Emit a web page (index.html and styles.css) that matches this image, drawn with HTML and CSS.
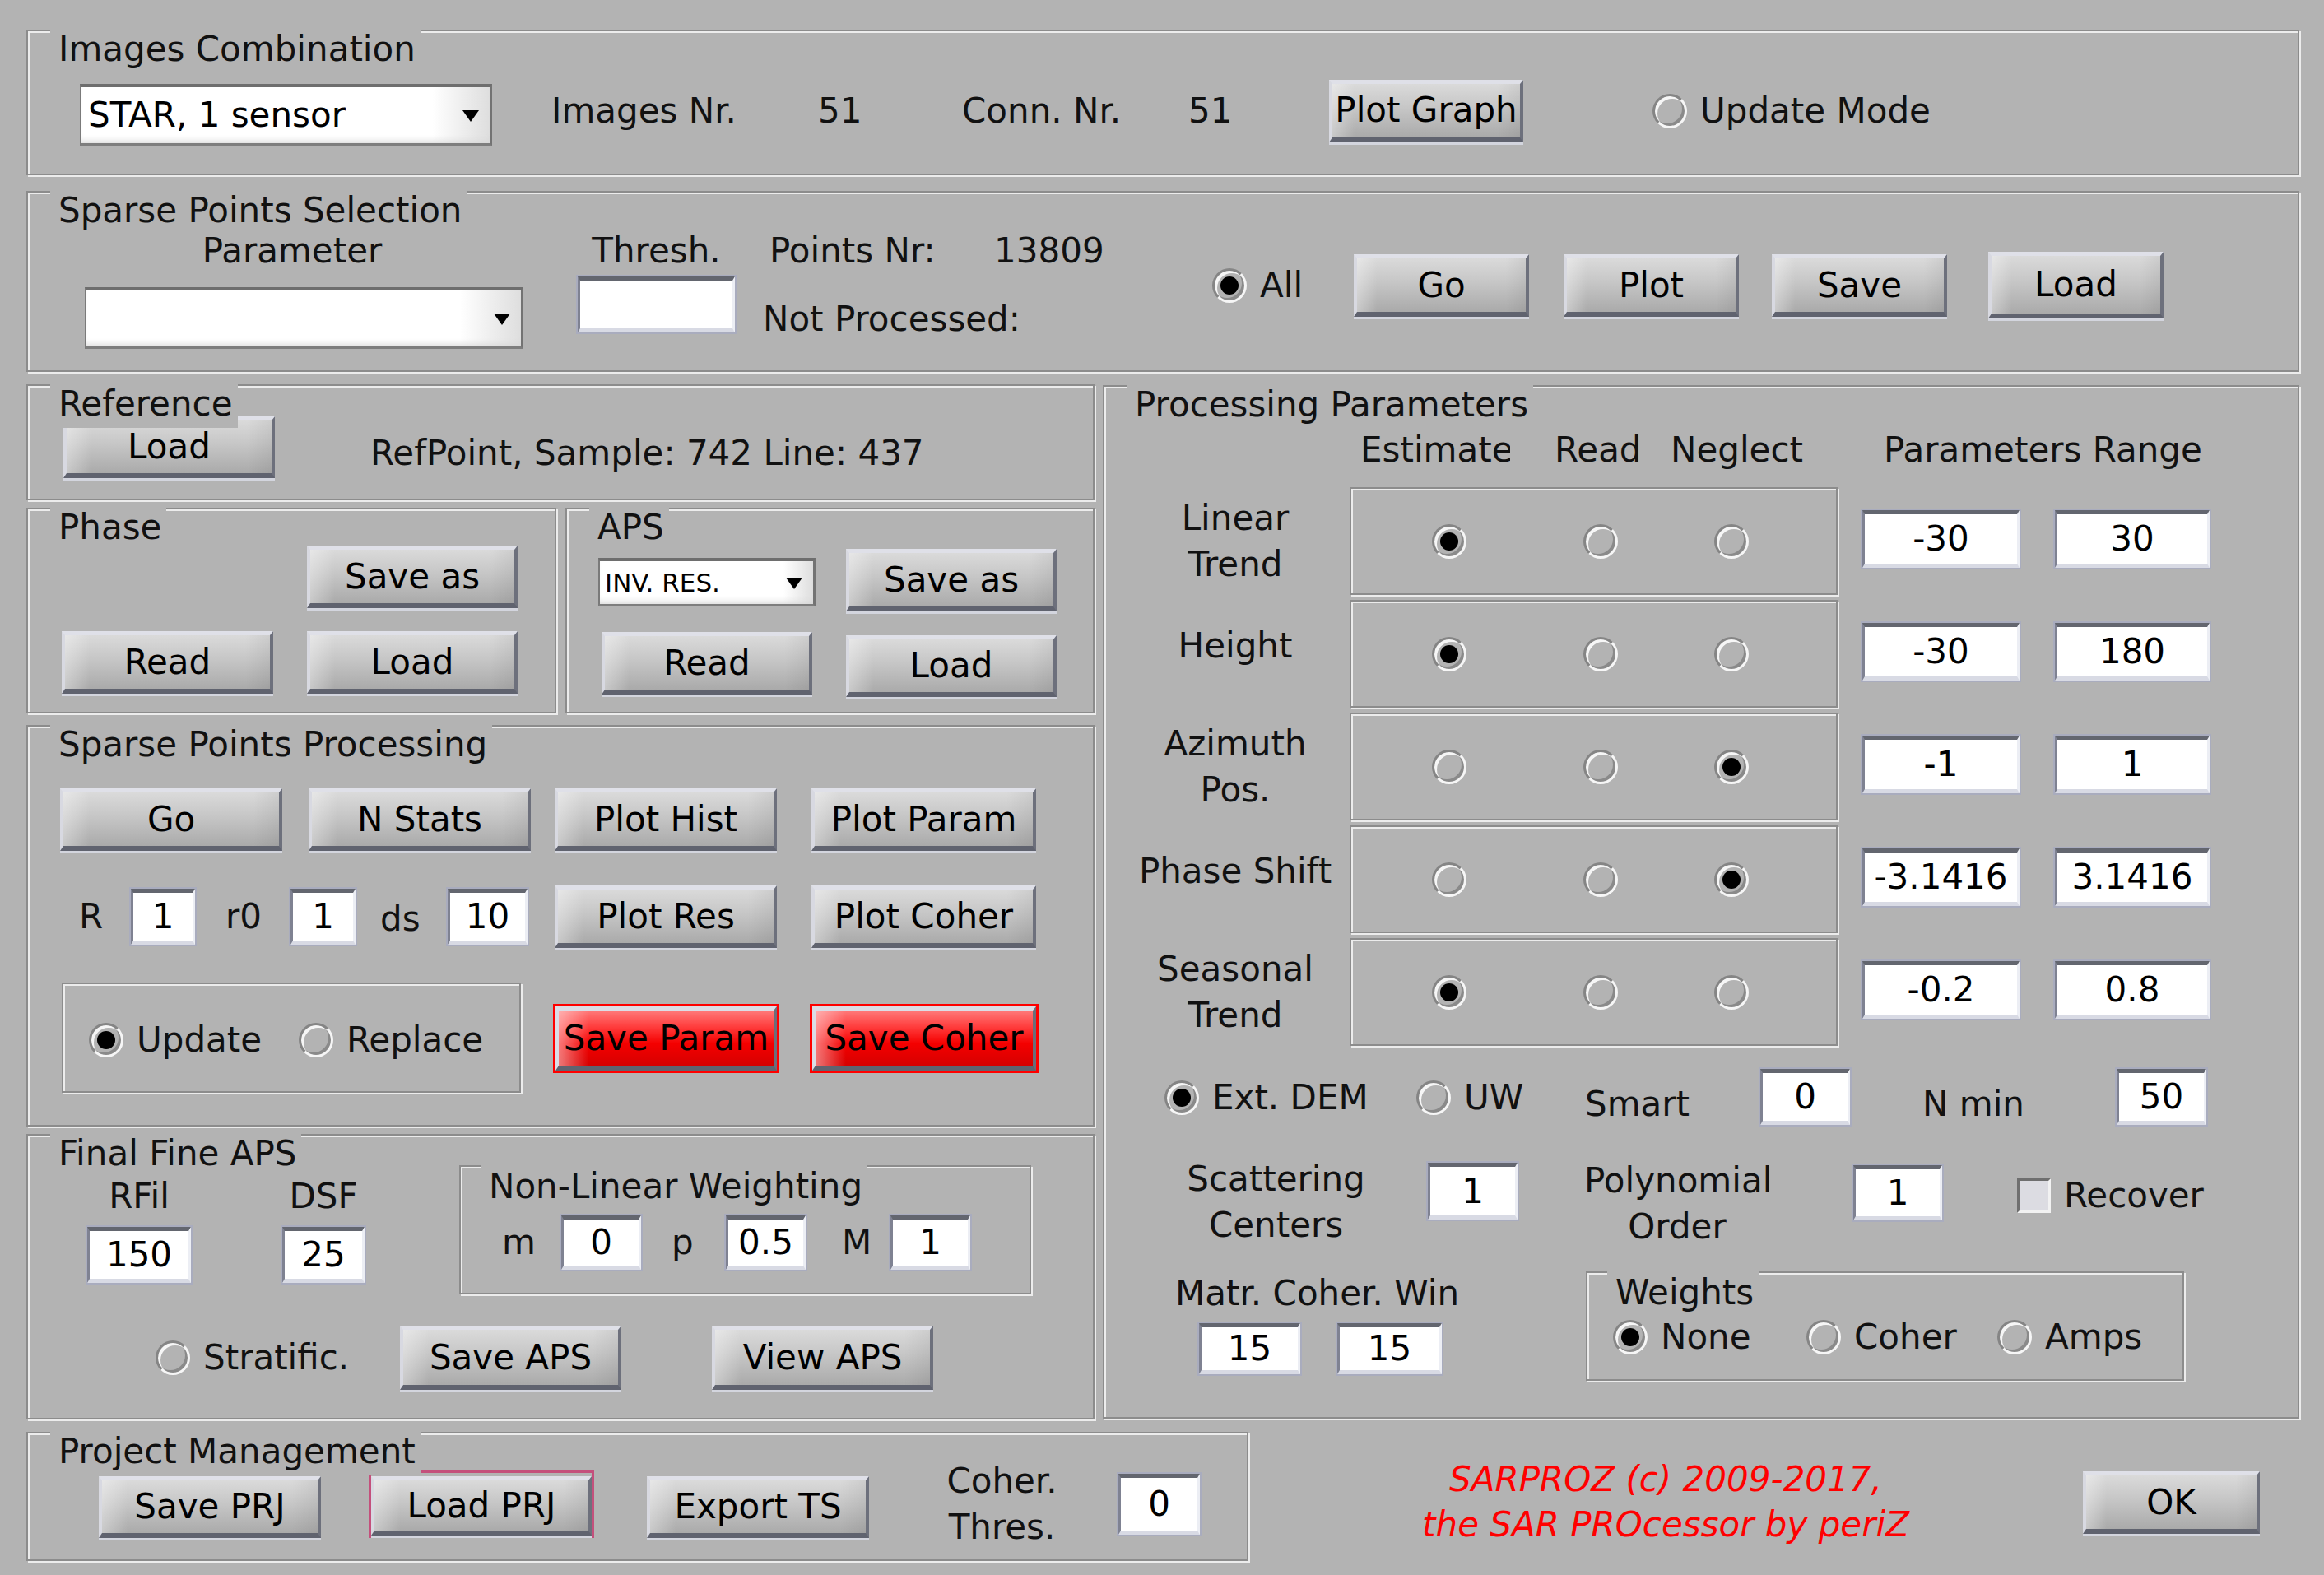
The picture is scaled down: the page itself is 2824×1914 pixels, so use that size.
FILE: index.html
```html
<!DOCTYPE html>
<html>
<head>
<meta charset="utf-8">
<title>SARPROZ Sparse Points Processing</title>
<link rel="stylesheet" href="styles.css">
</head>
<body>
<div class="fig">

  <section class="panel p-images">
    <div class="ptitle">Images Combination</div>
    <div class="row-images">
      <div class="dd dd-star">STAR, 1 sensor</div>
      <span>Images Nr.</span>
      <span>51</span>
      <span>Conn. Nr.</span>
      <span>51</span>
      <div class="btn btn-plotgraph">Plot Graph</div>
      <div class="opt"><span class="radio"></span><span>Update Mode</span></div>
    </div>
  </section>

  <section class="panel p-select">
    <div class="ptitle">Sparse Points Selection</div>
    <div class="row-select">
      <div class="col-param">
        <div class="lbl-param">Parameter</div>
        <div class="dd dd-param"></div>
      </div>
      <div class="col-thresh">
        <div class="lbl-center">Thresh.</div>
        <div class="inp inp-thresh"></div>
      </div>
      <div class="col-points">
        <div class="points-line"><span class="pn">Points Nr:</span><span>13809</span></div>
        <div class="np-line">Not Processed:</div>
      </div>
      <div class="opt opt-all"><span class="radio on"></span><span>All</span></div>
      <div class="btn btn-sel">Go</div>
      <div class="btn btn-sel btn-plot">Plot</div>
      <div class="btn btn-sel btn-save">Save</div>
      <div class="btn btn-sel btn-load">Load</div>
    </div>
  </section>

  <div class="middle">
    <div class="leftcol">
      <section class="panel p-ref">
        <div class="ptitle">Reference</div>
        <div class="row-ref">
          <div class="btn btn-refload">Load</div>
          <span class="reftext">RefPoint, Sample: 742 Line: 437</span>
        </div>
      </section>

      <div class="phase-row">
        <section class="panel p-phase">
          <div class="ptitle">Phase</div>
          <div class="grid-phase">
            <div></div>
            <div class="btn">Save as</div>
            <div class="btn">Read</div>
            <div class="btn">Load</div>
          </div>
        </section>
        <section class="panel p-aps">
          <div class="ptitle">APS</div>
          <div class="grid-aps">
            <div class="dd dd-small">INV. RES.</div>
            <div class="btn">Save as</div>
            <div class="btn btn-aps-read">Read</div>
            <div class="btn btn-aps-load">Load</div>
          </div>
        </section>
      </div>

      <section class="panel p-sproc">
        <div class="ptitle">Sparse Points Processing</div>
        <div class="grid-sproc">
          <div class="btn btn-sp">Go</div>
          <div class="btn btn-sp">N Stats</div>
          <div class="btn btn-sp">Plot Hist</div>
          <div class="btn btn-sp btn-wide">Plot Param</div>

          <div class="rparams">
            <span>R</span>
            <div class="inp inp-r">1</div>
            <span>r0</span>
            <div class="inp inp-r0">1</div>
            <span class="ds">ds</span>
            <div class="inp inp-ds">10</div>
          </div>
          <div class="btn btn-sp">Plot Res</div>
          <div class="btn btn-sp btn-wide">Plot Coher</div>

          <div class="subframe">
            <div class="opt opt-update"><span class="radio on"></span><span>Update</span></div>
            <div class="opt"><span class="radio"></span><span>Replace</span></div>
          </div>
          <div class="btn btn-red">Save Param</div>
          <div class="btn btn-red btn-red-wide">Save Coher</div>
        </div>
      </section>

      <section class="panel p-final">
        <div class="ptitle">Final Fine APS</div>
        <div class="final-top">
          <div class="col-rfil">
            <div class="lbl-center">RFil</div>
            <div class="inp inp-final">150</div>
          </div>
          <div class="col-dsf">
            <div class="lbl-center">DSF</div>
            <div class="inp inp-final">25</div>
          </div>
          <div class="panel frame-nlw">
            <div class="ptitle ptitle-sub">Non-Linear Weighting</div>
            <div class="row-nlw">
              <span>m</span>
              <div class="inp inp-nlw">0</div>
              <span>p</span>
              <div class="inp inp-nlw">0.5</div>
              <span>M</span>
              <div class="inp inp-nlw">1</div>
            </div>
          </div>
        </div>
        <div class="final-bottom">
          <div class="opt"><span class="radio"></span><span>Stratific.</span></div>
          <div class="btn btn-aps">Save APS</div>
          <div class="btn btn-aps">View APS</div>
        </div>
      </section>
    </div>

    <section class="panel p-proc">
      <div class="ptitle">Processing Parameters</div>
      <div class="proc-head">
        <span class="hd-est">Estimate</span>
        <span>Read</span>
        <span>Neglect</span>
        <span>Parameters Range</span>
      </div>
      <div class="proc-rows">
        <div class="prow">
          <div class="plabel">Linear<br>Trend</div>
          <div class="panel pbox"><span class="radio on"></span><span class="radio"></span><span class="radio"></span></div>
          <div class="inp rng1">-30</div>
          <div class="inp rng2">30</div>
        </div>
        <div class="prow">
          <div class="plabel single">Height</div>
          <div class="panel pbox"><span class="radio on"></span><span class="radio"></span><span class="radio"></span></div>
          <div class="inp rng1">-30</div>
          <div class="inp rng2">180</div>
        </div>
        <div class="prow">
          <div class="plabel">Azimuth<br>Pos.</div>
          <div class="panel pbox"><span class="radio"></span><span class="radio"></span><span class="radio on"></span></div>
          <div class="inp rng1">-1</div>
          <div class="inp rng2">1</div>
        </div>
        <div class="prow">
          <div class="plabel single">Phase Shift</div>
          <div class="panel pbox"><span class="radio"></span><span class="radio"></span><span class="radio on"></span></div>
          <div class="inp rng1">-3.1416</div>
          <div class="inp rng2">3.1416</div>
        </div>
        <div class="prow">
          <div class="plabel">Seasonal<br>Trend</div>
          <div class="panel pbox"><span class="radio on"></span><span class="radio"></span><span class="radio"></span></div>
          <div class="inp rng1">-0.2</div>
          <div class="inp rng2">0.8</div>
        </div>
      </div>

      <div class="proc-dem">
        <div class="opt"><span class="radio on"></span><span>Ext. DEM</span></div>
        <div class="opt"><span class="radio"></span><span>UW</span></div>
        <span class="lower">Smart</span>
        <div class="inp inp-dem">0</div>
        <span class="lower">N min</span>
        <div class="inp inp-dem">50</div>
      </div>

      <div class="proc-scat">
        <div class="two-line lbl-scat">Scattering<br>Centers</div>
        <div class="inp inp-scat">1</div>
        <div class="two-line lbl-poly">Polynomial<br>Order</div>
        <div class="inp inp-poly">1</div>
        <div class="opt opt-chk"><span class="chk"></span><span>Recover</span></div>
      </div>

      <div class="proc-bottom">
        <div class="col-matr">
          <div class="matr-label">Matr. Coher. Win</div>
          <div class="matr-inputs">
            <div class="inp inp-win1">15</div>
            <div class="inp inp-win2">15</div>
          </div>
        </div>
        <div class="panel frame-weights">
          <div class="ptitle ptitle-sub">Weights</div>
          <div class="row-weights">
            <div class="opt"><span class="radio on"></span><span>None</span></div>
            <div class="opt"><span class="radio"></span><span>Coher</span></div>
            <div class="opt"><span class="radio"></span><span>Amps</span></div>
          </div>
        </div>
      </div>
    </section>
  </div>

  <div class="bottom">
    <section class="panel p-proj">
      <div class="ptitle">Project Management</div>
      <div class="row-proj">
        <div class="btn btn-prj">Save PRJ</div>
        <div class="focus"><div class="btn btn-prj-in">Load PRJ</div></div>
        <div class="btn btn-prj">Export TS</div>
        <div class="coher-lbl">Coher.<br>Thres.</div>
        <div class="inp inp-coher">0</div>
      </div>
    </section>
    <div class="credit">
      <span>SARPROZ (c) 2009-2017,</span>
      <span>the SAR PROcessor by periZ</span>
    </div>
    <div class="btn btn-ok">OK</div>
  </div>

</div>
</body>
</html>
```

FILE: styles.css
```css
* { box-sizing: border-box; }
html, body { margin: 0; padding: 0; }
body {
  background: #b3b3b3;
  font-family: "DejaVu Sans", "Liberation Sans", sans-serif;
  font-size: 42px;
  line-height: 48px;
  color: #111;
}
.fig {
  width: 2824px;
  height: 1914px;
  padding: 36px 0 0 32px;
  display: flex;
  flex-direction: column;
  overflow: hidden;
}

/* etched frames */
.panel {
  position: relative;
  border: 2px solid #8c8c8c;
  box-shadow: inset 2px 2px 0 #ececec, 2px 2px 0 #ececec;
}
.ptitle {
  position: absolute;
  left: 27px;
  top: -2px;
  padding: 0 6px 5px 10px;
  background: #b3b3b3;
  line-height: 48px;
  white-space: nowrap;
  z-index: 2;
}
.ptitle-sub { left: 24px; top: -2px; padding-top: 2px; }

/* controls */
.btn {
  display: flex;
  align-items: center;
  justify-content: center;
  white-space: nowrap;
  color: #000;
  background:
    linear-gradient(90deg, rgba(255,255,255,0.35) 0%, rgba(255,255,255,0) 12%, rgba(0,0,0,0) 88%, rgba(0,0,0,0.06) 100%),
    linear-gradient(180deg, #dadada 0%, #c6c6c6 45%, #aaaaaa 100%);
  border-top: 5px solid #dfe0e8;
  border-left: 4px solid #d8d9e1;
  border-right: 4px solid #6d707c;
  border-bottom: 6px solid #60636f;
  box-shadow: 0 3px 0 #d3d5de;
  flex: none;
}
.inp {
  display: flex;
  align-items: center;
  justify-content: center;
  background: #fff;
  color: #000;
  border-top: 5px solid #63666f;
  border-left: 3px solid #7f8292;
  border-right: 3px solid #eceef4;
  border-bottom: 5px solid #d8dae4;
  box-shadow: 0 0 0 2px #a9acbe;
  flex: none;
}
.dd {
  position: relative;
  display: flex;
  align-items: center;
  color: #000;
  padding-left: 8px;
  background: linear-gradient(90deg, #ffffff 0%, #ffffff 86%, #dedede 100%);
  border-top: 4px solid #6e6e6e;
  border-left: 2px solid #7a7a7a;
  border-right: 3px solid #737373;
  border-bottom: 3px solid #7e7e7e;
  box-shadow: inset 0 -8px 8px -6px #d6d6d6;
  white-space: nowrap;
}
.dd::after {
  content: "";
  position: absolute;
  right: 13px;
  top: 50%;
  margin-top: -6px;
  border-left: 10px solid transparent;
  border-right: 10px solid transparent;
  border-top: 14px solid #000;
}
.opt {
  display: flex;
  align-items: center;
  white-space: nowrap;
}
.radio {
  width: 42px;
  height: 42px;
  border-radius: 50%;
  border: 3px solid;
  border-color: #858585 #f6f6f6 #f6f6f6 #858585;
  box-shadow: inset 3px 3px 0 #f6f6f6, inset -3px -3px 0 #8a8a8a;
  display: flex;
  align-items: center;
  justify-content: center;
  flex: none;
}
.opt .radio { margin-right: 16px; }
.radio.on::after {
  content: "";
  width: 22px;
  height: 22px;
  border-radius: 50%;
  background: #000;
}
.chk {
  width: 41px;
  height: 42px;
  background: #dcdce2;
  border: 3px solid;
  border-color: #6f6f6f #f2f2f2 #f2f2f2 #6f6f6f;
  margin-right: 16px;
  flex: none;
}
.lbl-center { text-align: center; white-space: nowrap; }

/* images combination */
.p-images { width: 2762px; height: 177px; margin-bottom: 19px; }
.row-images {
  margin-top: 54px;
  padding-left: 63px;
  height: 78px;
  display: grid;
  grid-template-columns: 573px 324px 175px 275px 171px 393px auto;
  align-items: center;
}
.dd-star { width: 501px; height: 75px; align-self: start; margin-top: 10px; }
.btn-plotgraph { width: 236px; height: 76px; }

/* sparse points selection */
.p-select { width: 2762px; height: 220px; margin-bottom: 15px; }
.row-select {
  display: flex;
  align-items: flex-start;
  padding-top: 47px;
  padding-left: 69px;
}
.col-param { width: 533px; }
.lbl-param { text-align: center; padding-right: 29px; }
.dd-param { height: 75px; margin-top: 20px; }
.col-thresh { width: 191px; margin-left: 66px; }
.inp-thresh { height: 68px; margin-top: 7px; }
.col-points { width: 546px; margin-left: 34px; }
.points-line { display: flex; }
.pn { width: 273px; margin-left: 8px; }
.np-line { margin-top: 35px; }
.opt-all { width: 172px; margin-top: 42px; }
.btn-sel { width: 213px; height: 76px; margin-top: 28px; }
.btn-plot { margin-left: 42px; }
.btn-save { margin-left: 40px; }
.btn-load { margin-left: 50px; margin-top: 25px; height: 81px; }

/* middle */
.middle { display: flex; gap: 10px; }
.leftcol { width: 1298px; display: flex; flex-direction: column; }

.p-ref { height: 141px; margin-bottom: 9px; }
.row-ref {
  display: flex;
  align-items: center;
  padding-top: 37px;
  padding-left: 43px;
}
.btn-refload { width: 257px; height: 75px; }
.reftext { margin-left: 116px; padding-top: 15px; }

.phase-row { display: flex; gap: 11px; height: 250px; margin-bottom: 14px; }
.p-phase { width: 644px; height: 250px; }
.p-aps { width: 643px; height: 250px; }
.grid-phase {
  display: grid;
  grid-template-columns: 257px 256px;
  grid-template-rows: 76px 76px;
  column-gap: 41px;
  row-gap: 28px;
  padding-top: 44px;
  padding-left: 41px;
}
.grid-aps {
  display: grid;
  grid-template-columns: 264px 256px;
  grid-template-rows: 76px 76px;
  column-gap: 37px;
  row-gap: 25px;
  padding-top: 48px;
  padding-left: 38px;
}
.dd-small { font-size: 31px; height: 59px; margin-top: 11px; padding-left: 6px; }
.btn-aps-read { margin-left: 4px; width: 256px; }
.btn-aps-load { margin-top: 4px; height: 75px; }

/* sparse points processing */
.p-sproc { height: 488px; margin-bottom: 9px; }
.grid-sproc {
  display: grid;
  grid-template-columns: 302px 299px 312px 273px;
  grid-template-rows: 76px 76px 134px;
  row-gap: 42px;
  padding-top: 75px;
  padding-left: 39px;
}
.btn-sp { width: 270px; height: 76px; }
.btn-wide { width: 273px; }
.rparams {
  grid-column: span 2;
  display: grid;
  grid-template-columns: 63px 115px 79px 109px 82px 97px;
  align-items: center;
  padding-left: 23px;
}
.ds { padding-top: 6px; }
.inp-r { width: 78px; height: 68px; }
.inp-r0 { width: 79px; height: 68px; }
.inp-ds { width: 97px; height: 68px; }
.subframe {
  grid-column: span 2;
  width: 558px;
  height: 134px;
  margin-left: 2px;
  border: 2px solid #8c8c8c;
  box-shadow: inset 2px 2px 0 #ececec, 2px 2px 0 #ececec;
  display: flex;
  align-items: center;
  padding-left: 31px;
  padding-top: 6px;
}
.opt-update { width: 255px; }
.btn-red {
  width: 269px;
  height: 78px;
  margin-top: 29px;
  margin-left: 1px;
  outline: 3px solid #ff0000;
  background:
    linear-gradient(90deg, rgba(255,220,220,0.55) 0%, rgba(255,255,255,0) 14%),
    linear-gradient(180deg, #ff7a7a 0%, #ff3c3c 30%, #f40000 60%, #d60000 100%);
  border-top: 5px solid #dcdde6;
  border-left: 4px solid #dcdde6;
  border-right: 4px solid #6b6e7a;
  border-bottom: 6px solid #60636f;
  box-shadow: none;
}
.btn-red-wide { width: 272px; }

/* final fine aps */
.p-final { height: 347px; }
.final-top {
  display: flex;
  align-items: flex-start;
  padding-top: 36px;
  padding-left: 72px;
}
.col-rfil { width: 126px; margin-top: 14px; }
.col-dsf { width: 100px; margin-left: 111px; margin-top: 14px; }
.inp-final { height: 68px; margin-top: 13px; }
.frame-nlw { width: 695px; height: 157px; margin-left: 115px; }
.row-nlw {
  display: grid;
  grid-template-columns: 72px 134px 66px 141px 59px 96px;
  align-items: center;
  padding-top: 59px;
  padding-left: 50px;
}
.inp-nlw { width: 97px; height: 66px; }
.final-bottom {
  display: grid;
  grid-template-columns: 297px 379px auto;
  align-items: center;
  margin-top: 38px;
  padding-left: 155px;
}
.btn-aps { width: 269px; height: 78px; }

/* processing parameters */
.p-proc { width: 1454px; height: 1256px; margin-top: 1px; }
.proc-head {
  display: grid;
  grid-template-columns: 236px 141px 259px auto;
  padding-top: 53px;
  padding-left: 311px;
  white-space: nowrap;
}
.hd-est { width: 182px; overflow: hidden; }
.proc-rows {
  display: flex;
  flex-direction: column;
  gap: 6px;
  margin-top: 21px;
  padding-left: 28px;
}
.prow {
  display: grid;
  grid-template-columns: 270px 623px 234px 188px;
  height: 131px;
}
.plabel {
  width: 262px;
  text-align: center;
  line-height: 56px;
  align-self: center;
  white-space: nowrap;
}
.plabel.single { margin-bottom: 20px; }
.pbox {
  width: 593px;
  height: 131px;
  display: grid;
  grid-template-columns: 184px 159px 42px;
  align-items: center;
  padding-left: 98px;
}
.rng1 { width: 191px; height: 70px; align-self: start; margin-top: 28px; }
.rng2 { width: 188px; height: 70px; align-self: start; margin-top: 28px; }

.proc-dem {
  display: grid;
  grid-template-columns: 306px 205px 213px 197px 236px auto;
  align-items: center;
  height: 68px;
  margin-top: 28px;
  padding-left: 73px;
}
.proc-dem .opt { margin-top: 2px; }
.lower { padding-top: 17px; }
.inp-dem { width: 109px; height: 68px; }

.proc-scat {
  display: grid;
  grid-template-columns: 293px 190px 327px 199px auto;
  align-items: start;
  margin-top: 38px;
  padding-left: 100px;
}
.two-line { text-align: center; line-height: 56px; white-space: nowrap; }
.lbl-scat { width: 217px; }
.lbl-poly { width: 226px; margin-top: 2px; }
.inp-scat { width: 109px; height: 69px; margin-top: 8px; }
.inp-poly { width: 108px; height: 67px; margin-top: 11px; }
.opt-chk { margin-top: 24px; }

.proc-bottom {
  display: flex;
  align-items: flex-start;
  margin-top: 26px;
  padding-left: 86px;
}
.col-matr { width: 499px; }
.matr-label { margin-top: 3px; }
.matr-inputs { display: flex; gap: 45px; margin-top: 12px; padding-left: 29px; }
.inp-win1 { width: 123px; height: 62px; }
.inp-win2 { width: 127px; height: 62px; }
.frame-weights { width: 727px; height: 133px; }
.row-weights {
  display: grid;
  grid-template-columns: 235px 232px auto;
  padding-top: 54px;
  padding-left: 31px;
}

/* bottom */
.bottom { display: flex; margin-top: 15px; }
.p-proj { width: 1485px; height: 157px; flex: none; }
.row-proj {
  display: grid;
  grid-template-columns: 328px 338px 363px 210px auto;
  grid-template-rows: 82px;
  align-items: center;
  margin-top: 45px;
  padding-left: 86px;
}
.btn-prj { width: 270px; height: 75px; align-self: end; }
.focus {
  width: 274px;
  height: 82px;
  border: 3px solid #c4507c;
  padding-top: 4px;
}
.btn-prj-in { width: 100%; height: 72px; }
.coher-lbl { width: 137px; text-align: center; line-height: 56px; }
.inp-coher { width: 99px; height: 74px; }
.credit {
  flex: 1;
  display: flex;
  flex-direction: column;
  align-items: center;
  padding-top: 30px;
  color: #ff0000;
  font-style: italic;
  line-height: 55px;
  white-space: nowrap;
}
.btn-ok { width: 215px; height: 76px; margin-top: 48px; margin-right: 78px; }
```
